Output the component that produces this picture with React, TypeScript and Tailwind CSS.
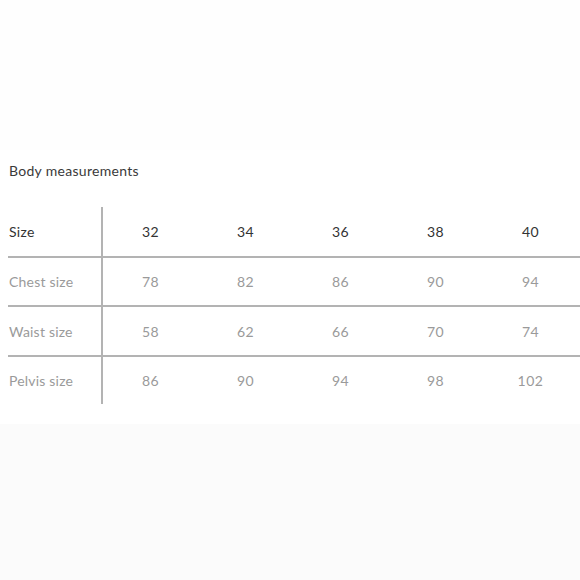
import React from "react";

const sizes = ["32", "34", "36", "38", "40"];
const rows: { label: string; values: string[]; h: string }[] = [
  { label: "Chest size", values: ["78", "82", "86", "90", "94"], h: "flex h-[49px] border-b-2 border-[#b3b3b3]" },
  { label: "Waist size", values: ["58", "62", "66", "70", "74"], h: "flex h-[50px] border-b-2 border-[#b3b3b3]" },
  { label: "Pelvis size", values: ["86", "90", "94", "98", "102"], h: "flex h-[47px]" },
];

export default function App() {
  return (
    <div
      className="w-[580px] h-[580px] bg-white flex flex-col overflow-hidden"
      style={{ fontFamily: "Lato, 'Open Sans', sans-serif" }}
    >
      <div className="h-[150px] bg-[#fefefe]" />
      <div className="pt-[11px] pl-[9px] text-[14px] leading-[20px] text-[#3a3a3a] tracking-[0.3px]">
        Body measurements
      </div>
      <div className="mt-[26px] ml-[8px] flex flex-col">
        <div className="flex h-[51px] border-b-2 border-[#b3b3b3]">
          <div className="w-[95px] shrink-0 border-r-2 border-[#b3b3b3] flex items-center pl-px text-[14px] text-[#333] tracking-[0.3px]">
            Size
          </div>
          {sizes.map((s) => (
            <div key={s} className="w-[95px] shrink-0 flex items-center justify-center text-[14px] text-[#333] tracking-[0.5px]">
              {s}
            </div>
          ))}
        </div>
        {rows.map((r) => (
          <div key={r.label} className={r.h}>
            <div className="w-[95px] shrink-0 border-r-2 border-[#b3b3b3] flex items-center pl-px text-[14px] text-[#9a9a9a] tracking-[0.2px]">
              {r.label}
            </div>
            {r.values.map((v, j) => (
              <div key={j} className="w-[95px] shrink-0 flex items-center justify-center text-[14px] text-[#9a9a9a] tracking-[0.5px]">
                {v}
              </div>
            ))}
          </div>
        ))}
      </div>
      <div className="mt-[20px] flex-1 bg-[#fbfbfb]" />
    </div>
  );
}
